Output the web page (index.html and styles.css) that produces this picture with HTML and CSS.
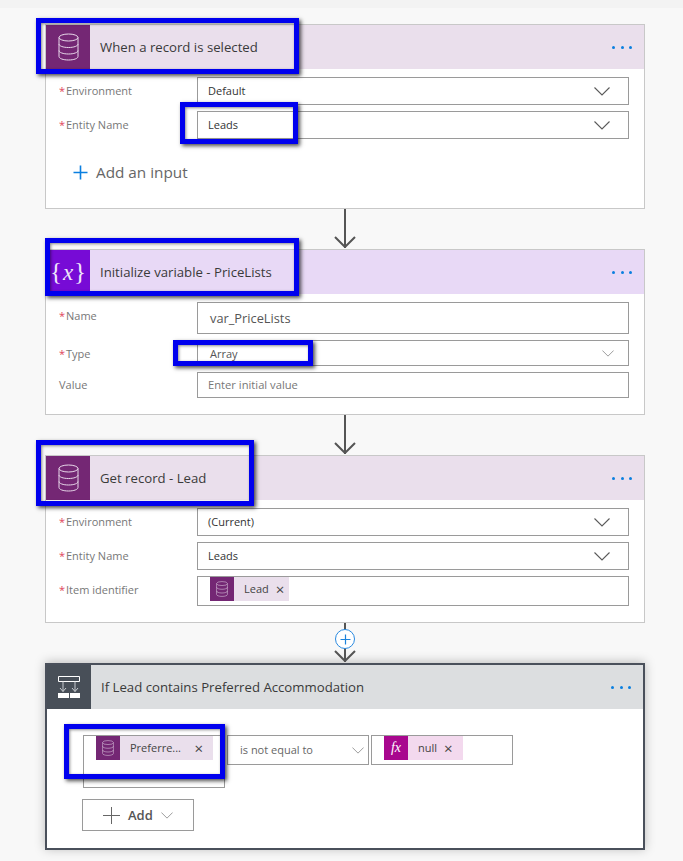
FILE: index.html
```html
<!DOCTYPE html>
<html lang="en">
<head>
<meta charset="utf-8">
<title>Flow</title>
<link rel="stylesheet" href="styles.css">
</head>
<body>
<svg class="defs" width="0" height="0" aria-hidden="true">
  <symbol id="db" viewBox="0 0 21 28">
    <g fill="none" stroke="currentColor" stroke-width="1">
      <ellipse cx="10.500" cy="4.500" rx="9.500" ry="3.500"/>
      <path d="M1 4.500v19c0 2 4.200 3.500 9.500 3.500s9.500-1.500 9.500-3.500v-19"/>
      <path d="M1 11c0 2 4.200 3.500 9.500 3.500S20 13 20 11"/>
      <path d="M1 17.500c0 2 4.200 3.500 9.500 3.500s9.500-1.500 9.500-3.500"/>
    </g>
  </symbol>
  <symbol id="chev" viewBox="0 0 16 9">
    <path d="M.5.500 8 8l7.500-7.500" fill="none" stroke="currentColor" stroke-width="1.100"/>
  </symbol>
</svg>
<div class="strip"></div>
<main class="stage">
  <section class="card rec">
    <header class="head">
      <span class="tile"><svg class="dbicon"><use href="#db"/></svg></span>
      <h2 class="title">When a record is selected</h2>
      <span class="more"><i></i><i></i><i></i></span>
    </header>
    <div class="body">
      <div class="row"><label class="lbl"><b>*</b>Environment</label><div class="field"><span>Default</span><svg class="chev"><use href="#chev"/></svg></div></div>
      <div class="row"><label class="lbl"><b>*</b>Entity Name</label><div class="field"><span>Leads</span><svg class="chev"><use href="#chev"/></svg></div></div>
      <div class="addinput"><svg width="15" height="15" viewBox="0 0 15 15"><path d="M7.500.5v14M.5 7.500h14" stroke="#0a7fe0" stroke-width="1.600"/></svg><span>Add an input</span></div>
    </div>
  </section>
  <div class="link"><svg class="arrow" width="22" height="12" viewBox="0 0 22 12"><path d="M1 1l10 10L21 1" fill="none" stroke="#555" stroke-width="2"/></svg></div>
  <section class="card var">
    <header class="head">
      <span class="tile"><span class="curly">{<em>x</em>}</span></span>
      <h2 class="title">Initialize variable - PriceLists</h2>
      <span class="more"><i></i><i></i><i></i></span>
    </header>
    <div class="body body-var">
      <div class="row r-name"><label class="lbl"><b>*</b>Name</label><div class="field"><span class="val-in">var_PriceLists</span></div></div>
      <div class="row r-type"><label class="lbl"><b>*</b>Type</label><div class="field"><span class="val-in">Array</span><svg class="chev small"><use href="#chev"/></svg></div></div>
      <div class="row r-value"><label class="lbl"><i class="plain">Value</i></label><div class="field"><span class="ph">Enter initial value</span></div></div>
    </div>
  </section>
  <div class="link"><svg class="arrow" width="22" height="12" viewBox="0 0 22 12"><path d="M1 1l10 10L21 1" fill="none" stroke="#555" stroke-width="2"/></svg></div>
  <section class="card rec c3">
    <header class="head">
      <span class="tile"><svg class="dbicon"><use href="#db"/></svg></span>
      <h2 class="title">Get record - Lead</h2>
      <span class="more"><i></i><i></i><i></i></span>
    </header>
    <div class="body">
      <div class="row"><label class="lbl"><b>*</b>Environment</label><div class="field"><span>(Current)</span><svg class="chev"><use href="#chev"/></svg></div></div>
      <div class="row"><label class="lbl"><b>*</b>Entity Name</label><div class="field"><span>Leads</span><svg class="chev"><use href="#chev"/></svg></div></div>
      <div class="row r-item"><label class="lbl"><b>*</b>Item identifier</label>
        <div class="field field-chip"><span class="chip chip-rec chip-lead"><span class="chip-tile"><svg class="dbsmall"><use href="#db"/></svg></span><span class="chip-text">Lead</span><span class="x">×</span></span></div>
      </div>
    </div>
  </section>
  <div class="link link-plus">
    <span class="plus"><svg width="11" height="11" viewBox="0 0 11 11"><path d="M5.500.5v10M.5 5.500h10" stroke="#1c83dc" stroke-width="1.200"/></svg></span>
    <svg class="arrow" width="22" height="12" viewBox="0 0 22 12"><path d="M1 1l10 10L21 1" fill="none" stroke="#555" stroke-width="2"/></svg>
  </div>
  <section class="card cond">
    <header class="head">
      <span class="tile">
        <svg width="22" height="22" viewBox="0 0 22 22"><g fill="none" stroke="#fff"><path d="M.5.500h21v5H.5z"/></g><g fill="none" stroke="#c8ccd0"><path d="M5 5.500v10M17 5.500v10M2 12l3 3.500L8 12M14 12l3 3.500 3-3.500"/></g><path d="M0 17h11v5H0zM12 17h10v5H12z" fill="#fff"/></svg>
      </span>
      <h2 class="title">If Lead contains Preferred Accommodation</h2>
      <span class="more"><i></i><i></i><i></i></span>
    </header>
    <div class="body body-cond">
      <div class="cond-row">
        <div class="field c-left"><span class="chip chip-rec chip-pref"><span class="chip-tile"><svg class="dbsmall"><use href="#db"/></svg></span><span class="chip-text">Preferre...</span><span class="x">×</span></span></div>
        <div class="field c-op"><span>is not equal to</span><svg class="chev mini"><use href="#chev"/></svg></div>
        <div class="field c-right"><span class="chip chip-fx"><span class="chip-tile fx"><em>fx</em></span><span class="chip-text">null</span><span class="x">×</span></span></div>
      </div>
      <button class="add" type="button"><svg width="17" height="17" viewBox="0 0 17 17"><path d="M8.500 0v17M0 8.500h17" stroke="#666" stroke-width="1"/></svg><span>Add</span><svg class="chev mini"><use href="#chev"/></svg></button>
    </div>
  </section>
  <div class="mark m1"></div>
  <div class="mark m2"></div>
  <div class="mark m3"></div>
  <div class="mark m4"></div>
  <div class="mark m5"></div>
  <div class="mark m6"></div>
</main>
</body>
</html>
```
FILE: styles.css
```css
* { box-sizing: border-box; }
html, body { margin: 0; padding: 0; }
body {
  width: 683px;
  height: 861px;
  overflow: hidden;
  background: #f8f8f8;
  font-family: "Open Sans", "Noto Sans", sans-serif;
  color: #444;
}
.defs { position: absolute; }
.strip { height: 8px; background: #f3f3f3; }
.stage { position: relative; padding: 16px 38px 0 45px; }

.card { background: #fff; border: 1px solid #c8c8c8; }
.head { display: flex; align-items: center; height: 44px; }
.tile {
  width: 44px; height: 44px; flex: none;
  display: flex; align-items: center; justify-content: center;
  color: #e8d8ea;
}
.title { margin: 0 0 0 10px; flex: 1; font-size: 13.200px; font-weight: 400; color: #3a3a3a; }
.more { display: flex; gap: 5.300px; margin-right: 12px; }
.more i { width: 3px; height: 3px; border-radius: 50%; background: #0a7fe0; }

.rec .head { background: #eadfec; }
.rec .tile { background: #742774; }
.var .head { background: #e8d9f6; }
.var .tile { background: #770bd6; }
.cond { border: 2px solid #4a505b; box-shadow: 0 -1px 10px rgba(0,0,0,.25); }
.cond .head { background: #dcdee0; height: 44px; }
.cond .tile { background: #484f58; }
.cond .title { margin-left: 10px; }

.dbicon { width: 21px; height: 28px; }
.dbsmall { width: 12px; height: 16px; }
.curly { color: #f0e6fa; font-family: "Liberation Serif", serif; font-size: 25px; line-height: 1; position: relative; top: -1px; }
.curly em { font-size: 23px; margin: 0 1px; }

.body { padding: 8px 15px 0 13px; }
.rec .body { height: 139px; }
.c3 .body { height: 122px; }
.row { display: flex; align-items: stretch; height: 28px; margin-bottom: 6px; }
.lbl { width: 138px; flex: none; display: flex; align-items: center; font-size: 11px; color: #777; padding-bottom: 2px; }
.lbl b { color: #e0445a; font-weight: 400; width: 7px; flex: none; }
.plain { font-style: normal; }
.field {
  flex: 1; min-width: 0; display: flex; align-items: center; justify-content: space-between;
  border: 1px solid #9a9a9a; background: #fff; padding: 0 18px 0 10px;
  font-size: 11px; color: #333;
}
.field > span:first-child:not(.chip):not(.val-in) { margin-bottom: 2px; }
.chev { width: 16px; height: 9px; color: #5a5a5a; flex: none; }
.chev.small { width: 12px; height: 7px; color: #888; margin-right: -4px; }
.chev.mini { width: 12px; height: 7px; color: #888; }

.addinput { display: flex; align-items: center; gap: 8px; margin: 23px 0 0 14px; font-size: 15.300px; color: #666; }

.body-var { padding-top: 8px; height: 120px; }
.r-name { height: 32px; margin-bottom: 6px; }
.r-name .lbl { align-items: flex-start; padding: 6px 0 0; }
.r-name .val-in { font-size: 12.800px; color: #555; }
.r-type { height: 26px; margin-bottom: 6px; }
.r-type .lbl { padding: 1px 0 0; }
.r-value { height: 26px; }
.val-in { padding-left: 2px; font-size: 11px; color: #555; }
.ph { color: #777; font-size: 11.200px; }

.link { height: 40px; display: flex; justify-content: center; align-items: flex-end; position: relative; }
.link::before { content: ""; position: absolute; left: 299px; top: 0; bottom: 1px; width: 2px; background: #555; }
.arrow { position: relative; margin-bottom: 1px; }
.link-plus { height: 40px; }
.plus {
  position: absolute; left: 290px; top: 6px; width: 20px; height: 20px; border-radius: 50%;
  background: #fff; border: 1px solid #2a8ae0; display: flex; align-items: center; justify-content: center;
}

.r-item { height: 30px; margin-bottom: 0; }
.r-item .lbl { padding-bottom: 3px; }
.field-chip { justify-content: flex-start; align-items: flex-start; padding: 0 0 0 12px; }
.chip { display: inline-flex; align-items: center; height: 24px; font-size: 11px; color: #444; }
.chip-rec { background: #eadfec; }
.chip-lead { width: 79px; }
.chip-tile { width: 24px; height: 24px; display: flex; align-items: center; justify-content: center; color: #d8c4dc; flex: none; }
.chip-rec .chip-tile { background: #742774; }
.chip-text { margin-left: 10px; margin-bottom: 1px; }
.x { margin: 0 0 0 7px; font-size: 15px; line-height: 1; }

.body-cond { padding: 26px 0 0 36px; height: 139px; }
.cond-row { display: flex; align-items: flex-start; gap: 2px; }
.c-left { flex: none; width: 142px; height: 53px; align-items: flex-start; justify-content: flex-start; padding: 0 0 0 12px; }
.chip-pref { width: 117px; }
.chip-pref .x { margin: 0 10px 0 auto; }
.c-op { flex: none; width: 142px; height: 30px; padding: 0 4px 0 12px; color: #666; }
.c-right { flex: none; width: 142px; height: 30px; justify-content: flex-start; padding: 0 0 0 12px; align-items: flex-start; }
.chip-fx { background: #f3d9ee; width: 79px; }
.fx { background: #a8078e; color: #fff; font-family: "Liberation Serif", serif; font-size: 14px; }
.fx em { font-style: italic; }
.add {
  display: flex; align-items: center; gap: 8px; margin-top: 11px; width: 112px; height: 32px; margin-left: -1px;
  padding: 0 0 0 20px; background: #fff; border: 1px solid #9a9a9a; font: 600 13px "Open Sans", sans-serif; color: #555;
}

.mark { position: absolute; border: 5px solid #0000ee; box-shadow: 2px 2px 4px rgba(0,0,0,.7), inset 1px 1px 3px rgba(0,0,0,.45); }
.m1 { left: 36px; top: 10px; width: 263px; height: 56px; }
.m2 { left: 180px; top: 94px; width: 118px; height: 42px; }
.m3 { left: 45px; top: 230px; width: 254px; height: 58px; }
.m4 { left: 173px; top: 332px; width: 140px; height: 26px; }
.m5 { left: 36px; top: 432px; width: 218px; height: 66px; }
.m6 { left: 64px; top: 716px; width: 161px; height: 55px; }
```
